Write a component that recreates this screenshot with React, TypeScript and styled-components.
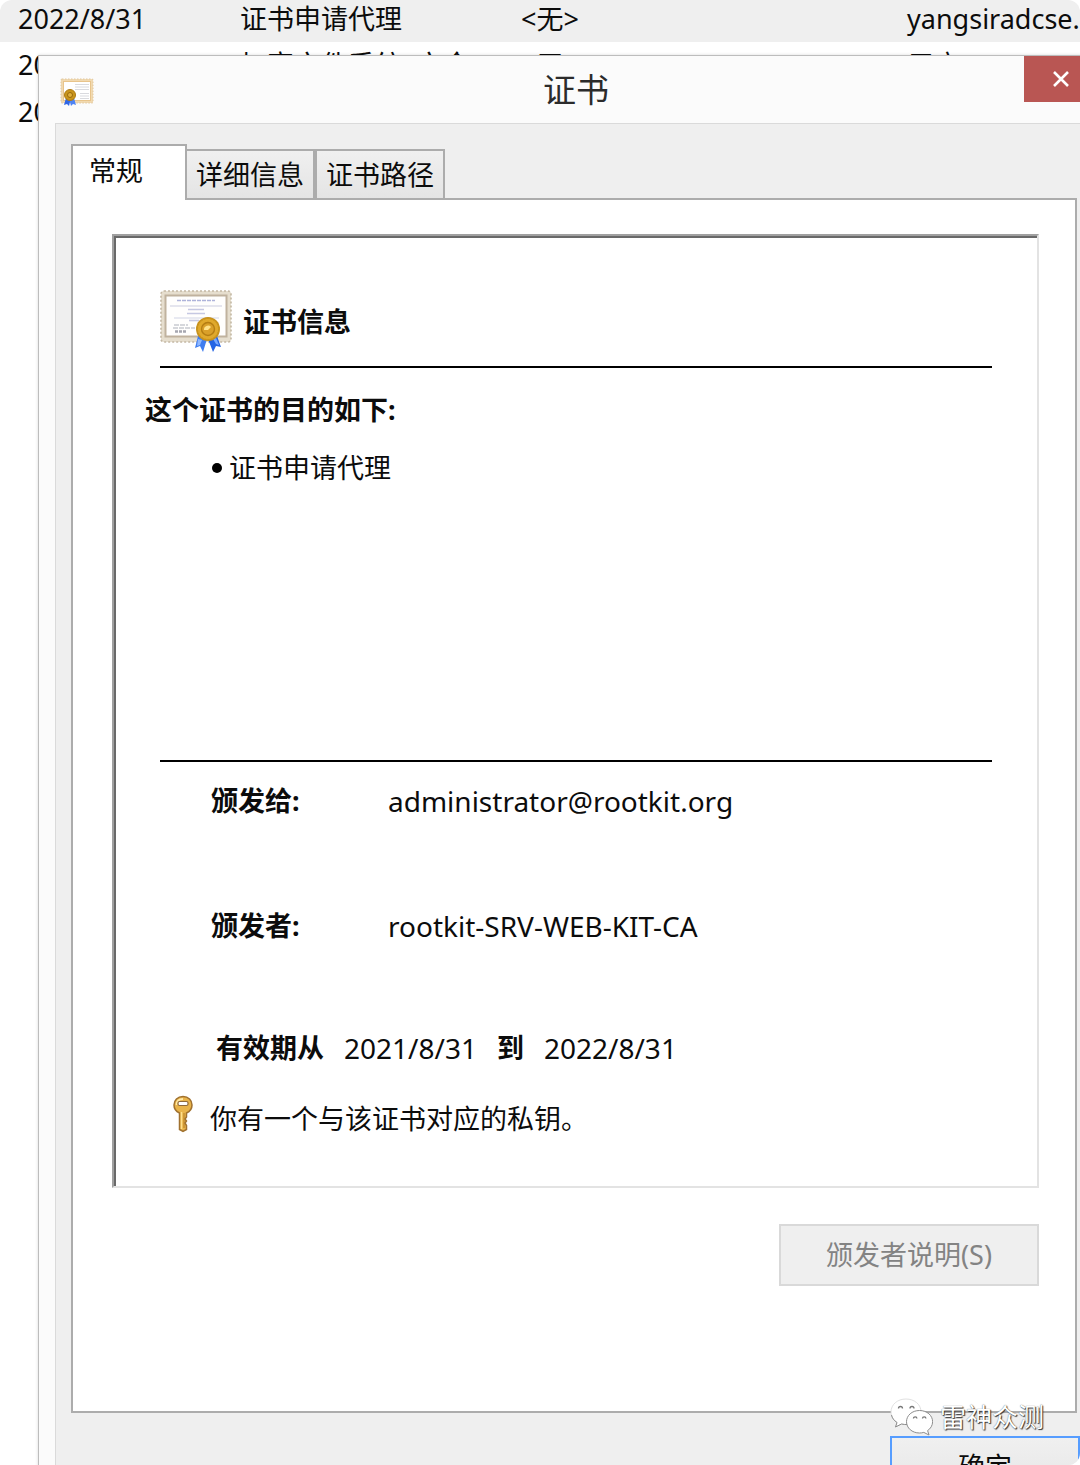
import React from "react";
import styled, { createGlobalStyle } from "styled-components";

const GlobalStyle = createGlobalStyle`
  * { box-sizing: border-box; }
  body {
    margin: 0;
    background: #ffffff;
    color: #0c0c0c;
    font-family: "Noto Sans", "Noto Sans CJK SC", sans-serif;
    font-size: 27px;
    line-height: 36px;
  }
  button { font: inherit; color: inherit; }
`;

const Desktop = styled.div`
  position: relative;
  display: grid;
  grid-template: minmax(0, 1fr) / minmax(0, 1fr);
  height: 100vh;
  overflow: hidden;
  border-radius: 12px;
  background: #ffffff;
`;

const CertTable = styled.table`
  grid-area: 1 / 1;
  align-self: start;
  width: 100%;
  table-layout: fixed;
  border-collapse: collapse;
  white-space: nowrap;
`;

const CertRow = styled.tr<{ $selected?: boolean }>`
  height: ${(p) => (p.$selected ? 42 : 46)}px;
  background: ${(p) => (p.$selected ? "#efefef" : "transparent")};

  & > td { padding-bottom: ${(p) => (p.$selected ? 4 : 0)}px; }
  & + & > td { padding-top: 2px; }
`;

const CertCell = styled.td<{ $inset?: boolean }>`
  padding: 0 0 0 ${(p) => (p.$inset ? 18 : 0)}px;
`;

const Dialog = styled.section`
  grid-area: 1 / 1;
  display: flex;
  flex-direction: column;
  margin: 55px -34px 0 38px;
  height: max-content;
  border: 1px solid #bdbdbd;
  background: #fbfbfb;
  padding: 0 16px 16px;
  box-shadow: 0 0 3px rgba(0, 0, 0, 0.15);
`;

const TitleBar = styled.header`
  display: grid;
  grid-template-columns: 73px 1fr 73px;
  align-items: start;
  height: 67px;
`;

const TitleIcon = styled.div`
  display: flex;
  padding: 22px 0 0 5px;
`;

const Title = styled.h1`
  margin: 0;
  padding-top: 12px;
  font-size: 33px;
  font-weight: 400;
  line-height: 44px;
  text-align: center;
  color: #2b2b2b;
`;

const CloseButton = styled.button`
  display: flex;
  align-items: center;
  justify-content: center;
  height: 46px;
  padding: 0;
  border: 0;
  background: #b95653;
  color: #ffffff;
`;

const Client = styled.div`
  border: 1px solid #dadada;
  background: #efefef;
  padding: 20px 16px 24px 15px;
`;

const TabList = styled.div`
  display: flex;
  align-items: flex-end;
  position: relative;
  margin-bottom: -2px;
`;

const Tab = styled.button<{ $active?: boolean }>`
  height: ${(p) => (p.$active ? 56 : 51)}px;
  padding: ${(p) => (p.$active ? "0 42px 5px 16px" : "0 9px")};
  border: 2px solid #acacac;
  border-bottom-width: ${(p) => (p.$active ? 0 : 2)}px;
  background: ${(p) => (p.$active ? "#ffffff" : "linear-gradient(#f0f0f0, #e4e4e4)")};
  & + & { margin-left: -2px; }
  & + & + & { margin-left: 0; }
`;

const TabPanel = styled.div`
  margin-right: 3px;
  border: 2px solid #acacac;
  background: #ffffff;
  padding: 34px 36px 125px 39px;
`;

const Sunken = styled.div`
  border: 2px solid #a0a0a0;
  border-right-color: #e3e3e3;
  border-bottom-color: #e3e3e3;
  box-shadow: inset 2px 2px 0 #696969;
  padding: 54px 45px 49px 31px;
`;

const InfoHeader = styled.div`
  display: flex;
  align-items: center;
  gap: 11px;
  margin-left: 15px;
  height: 63px;
`;

const Heading = styled.h2`
  margin: 0;
  font-size: 27px;
  font-weight: 700;
`;

const Rule = styled.hr`
  margin: 0 0 0 15px;
  border: 0;
  height: 2px;
  background: #000000;
`;

const Purposes = styled.div`
  margin-top: 13px;
  min-height: 394px;
`;

const PurposeTitle = styled.h3`
  margin: 24px 0 0;
  font-size: 27px;
  font-weight: 700;
`;

const PurposeList = styled.ul`
  margin: 22px 0 0;
  padding: 0 0 0 67px;
  list-style: none;
`;

const PurposeItem = styled.li`
  display: flex;
  align-items: center;
  gap: 7px;
  &::before {
    content: "";
    width: 10px;
    height: 10px;
    border-radius: 50%;
    background: #000000;
  }
`;

const Details = styled.dl`
  display: grid;
  grid-template-columns: 177px 1fr;
  row-gap: 89px;
  margin: 21px 0 0;
  padding-left: 66px;
`;

const Term = styled.dt`
  font-weight: 700;
`;

const Value = styled.dd`
  margin: 0;
  font-size: 28px;
`;

const Validity = styled.p`
  display: flex;
  gap: 20px;
  margin: 86px 0 0;
  padding-left: 71px;
`;

const DateText = styled.span`
  font-size: 28px;
`;

const KeyNote = styled.p`
  display: flex;
  align-items: flex-start;
  gap: 16px;
  margin: 29px 0 0;
  padding-left: 27px;
`;

const KeyText = styled.span`
  padding-top: 6px;
`;

const Actions = styled.div<{ $top: number }>`
  display: flex;
  justify-content: flex-end;
  margin-top: ${(p) => p.$top}px;
`;

const StatementButton = styled.button`
  width: 260px;
  height: 62px;
  border: 2px solid #d9d9d9;
  background: #efefef;
  &:disabled { color: #838383; }
`;

const OkButton = styled.button`
  width: 190px;
  height: 62px;
  border: 2px solid #569dff;
  background: linear-gradient(#f0f0f0, #e5e5e5);
`;

const Watermark = styled.div`
  position: absolute;
  right: 36px;
  bottom: 29px;
  display: flex;
  align-items: center;
  gap: 7px;
  font-size: 26px;
  color: #ffffff;
  text-shadow: 1px 1px 1px #333333, 0 0 1px #555555;
`;

const Ribbon = () => (
  <g>
    <path d="M38 46l-3 12 5-2 3 6 4-13z" fill="#3f7df0" />
    <path d="M57 46l4 11-5-1-3 6-5-13z" fill="#2464e4" />
    <path d="M38 49l-1 7 3-1 2-5z" fill="#8fb8ff" />
    <path d="M56 48l3 7-3-1-3-5z" fill="#76a8ff" />
    <circle cx="48" cy="39" r="12" fill="#c8921c" />
    <circle cx="48" cy="39" r="10.5" fill="#e0a92c" stroke="#c8921c" strokeWidth="1" strokeDasharray="2 1" />
    <circle cx="48" cy="39" r="6.5" fill="#d9a02a" stroke="#b57d12" strokeWidth="1.4" />
    <path d="M44 40a4 4 0 0 1 7-3l-3 3z" fill="#ffe28a" />
  </g>
);

const CertificateLarge = () => (
  <svg width="72" height="63" viewBox="0 0 72 63" aria-hidden="true">
    <rect x="1" y="1" width="70" height="51" rx="3" fill="#e6dece" />
    <rect x="1" y="1" width="70" height="51" rx="3" fill="none" stroke="#c4b8a4" strokeWidth="1.6" strokeDasharray="2 2" />
    <rect x="5.5" y="5.5" width="61" height="41" fill="#fffefd" stroke="#c0b29e" strokeWidth="2" />
    <g stroke="#c6c8e2" strokeWidth="1.6">
      <path d="M17 10.5h38" stroke="#aeb3da" strokeDasharray="4 1" />
      <path d="M10 16h52" stroke="#dcdde9" />
      <path d="M28 19.5h16M27 23.5h18" />
      <path d="M14 28h45" stroke="#e1e2ec" />
      <path d="M29 30.5h10" />
      <path d="M14 35h14M13 38h22" stroke="#c9cacf" strokeDasharray="5 1" />
      <path d="M15 41.5h12" stroke="#a7a7b0" strokeWidth="2.4" strokeDasharray="3 1" />
    </g>
    <Ribbon />
  </svg>
);

const CertificateSmall = () => (
  <svg width="34" height="29" viewBox="0 0 34 29" aria-hidden="true">
    <rect x="1" y="1" width="32" height="24" rx="1" fill="#f1d9b0" />
    <rect x="1" y="1" width="32" height="24" rx="1" fill="none" stroke="#e0c79d" strokeDasharray="1.5 1.5" />
    <rect x="3.5" y="3.5" width="27" height="19" fill="#ffffff" stroke="#e8c48b" />
    <path d="M15 6.5h14M15 9h14M15 11.5h14M20 15.5h9M20 18h9M20 20.5h9" stroke="#d9dade" />
    <path d="M6 20l-2 7 3-1 2 2 2-8z" fill="#2f66e6" />
    <path d="M14 20l2 7-3-1-2 2-2-8z" fill="#4d83f4" />
    <circle cx="10" cy="17" r="5.5" fill="#c9951c" stroke="#ad7a12" />
    <circle cx="10" cy="17" r="2.5" fill="#e0b03c" stroke="#98690d" />
  </svg>
);

const KeyIcon = () => (
  <svg width="22" height="38" viewBox="0 0 22 38" aria-hidden="true">
    <path
      d="M11 1.5c5.5 0 9 4 9 8.500 0 4-2 6.500-5.500 8v4l-1.500 2 1.500 2-1.500 2 1.500 2.500v4L11 36.500 7.500 34.500V18C4 16.500 2 14 2 10c0-4.500 3.500-8.500 9-8.500z"
      fill="#e9b44a"
      stroke="#a0712f"
      strokeWidth="1.5"
    />
    <path d="M4.5 10c0-4 2.500-6 6.500-6" fill="none" stroke="#ffe9a6" strokeWidth="1.8" />
    <rect x="6" y="6.5" width="10" height="4" rx="1.5" fill="#ffffff" stroke="#8f6a3a" strokeWidth="1.2" />
    <path d="M9.5 17v17" stroke="#ffe08c" strokeWidth="1.5" />
    <path d="M12 18v15" stroke="#b47c25" strokeWidth="1" />
  </svg>
);

const CloseIcon = () => (
  <svg width="18" height="18" viewBox="0 0 18 18" aria-hidden="true">
    <path d="M2 2l14 14M16 2L2 16" stroke="#ffffff" strokeWidth="2.600" />
  </svg>
);

const ChatLogo = () => (
  <svg width="43" height="38" viewBox="0 0 43 38" aria-hidden="true">
    <path
      d="M16 1C7.500 1 1 6.500 1 14c0 4.500 2.200 8 6 10.500L5.500 29l6-3c1.500.4 3 .6 4.500.6 8.500 0 15-5.700 15-12.800C31 6.500 24.500 1 16 1z"
      fill="#ffffff"
      stroke="#d8d8d8"
      strokeWidth=".8"
    />
    <path d="M1.500 17c.6 3 2.500 5.500 5.500 7.500L5.500 29l6-3c2 .5 4 .6 6 .5" fill="none" stroke="#8d8d8d" />
    <path
      d="M29.500 12.500c-7.500 0-13 5-13 11.200s5.500 11.300 13 11.300c1.500 0 3-.2 4.300-.6l5.200 2.600-1.400-4.400c3-2 5-5.200 5-8.900 0-6.200-5.600-11.200-13.100-11.200z"
      fill="#ffffff"
      stroke="#8d8d8d"
      strokeWidth="1"
    />
    <path
      d="M8.500 10.500a2 2 0 0 1 4 0M20 10.500a2 2 0 0 1 4 0M23.500 20.500a1.700 1.700 0 0 1 3.400 0M32.500 20.500a1.700 1.700 0 0 1 3.400 0"
      fill="none"
      stroke="#777777"
      strokeWidth="1.300"
    />
  </svg>
);

const certificates = [
  { expires: "2022/8/31", purpose: "证书申请代理", name: "<无>", template: "yangsiradcse.", selected: true },
  { expires: "2022/8/31", purpose: "加密文件系统, 安全", name: "<无>", template: "用户" },
  { expires: "2022/8/31", purpose: "", name: "", template: "" },
];

export default function App() {
  return (
    <>
      <GlobalStyle />
      <Desktop>
        <CertTable>
          <colgroup>
            <col width={240} />
            <col width={281} />
            <col width={386} />
            <col />
          </colgroup>
          <tbody>
            {certificates.map((c, i) => (
              <CertRow key={i} $selected={c.selected}>
                <CertCell $inset>{c.expires}</CertCell>
                <CertCell>{c.purpose}</CertCell>
                <CertCell>{c.name}</CertCell>
                <CertCell>{c.template}</CertCell>
              </CertRow>
            ))}
          </tbody>
        </CertTable>

        <Dialog role="dialog" aria-labelledby="dialog-title">
          <TitleBar>
            <TitleIcon><CertificateSmall /></TitleIcon>
            <Title id="dialog-title">证书</Title>
            <CloseButton type="button" aria-label="关闭"><CloseIcon /></CloseButton>
          </TitleBar>
          <Client>
            <TabList role="tablist">
              <Tab type="button" role="tab" aria-selected="true" $active>常规</Tab>
              <Tab type="button" role="tab" aria-selected="false">详细信息</Tab>
              <Tab type="button" role="tab" aria-selected="false">证书路径</Tab>
            </TabList>
            <TabPanel role="tabpanel">
              <Sunken>
                <InfoHeader>
                  <CertificateLarge />
                  <Heading>证书信息</Heading>
                </InfoHeader>
                <Purposes>
                  <Rule />
                  <PurposeTitle>这个证书的目的如下:</PurposeTitle>
                  <PurposeList>
                    <PurposeItem>证书申请代理</PurposeItem>
                  </PurposeList>
                </Purposes>
                <Rule />
                <Details>
                  <Term>颁发给:</Term>
                  <Value>administrator@rootkit.org</Value>
                  <Term>颁发者:</Term>
                  <Value>rootkit-SRV-WEB-KIT-CA</Value>
                </Details>
                <Validity>
                  <b>有效期从</b>
                  <DateText>2021/8/31</DateText>
                  <b>到</b>
                  <DateText>2022/8/31</DateText>
                </Validity>
                <KeyNote>
                  <KeyIcon />
                  <KeyText>你有一个与该证书对应的私钥。</KeyText>
                </KeyNote>
              </Sunken>
              <Actions $top={36}>
                <StatementButton type="button" disabled>颁发者说明(S)</StatementButton>
              </Actions>
            </TabPanel>
            <Actions $top={23}>
              <OkButton type="button">确定</OkButton>
            </Actions>
          </Client>
        </Dialog>

        <Watermark>
          <ChatLogo />
          <span>雷神众测</span>
        </Watermark>
      </Desktop>
    </>
  );
}
